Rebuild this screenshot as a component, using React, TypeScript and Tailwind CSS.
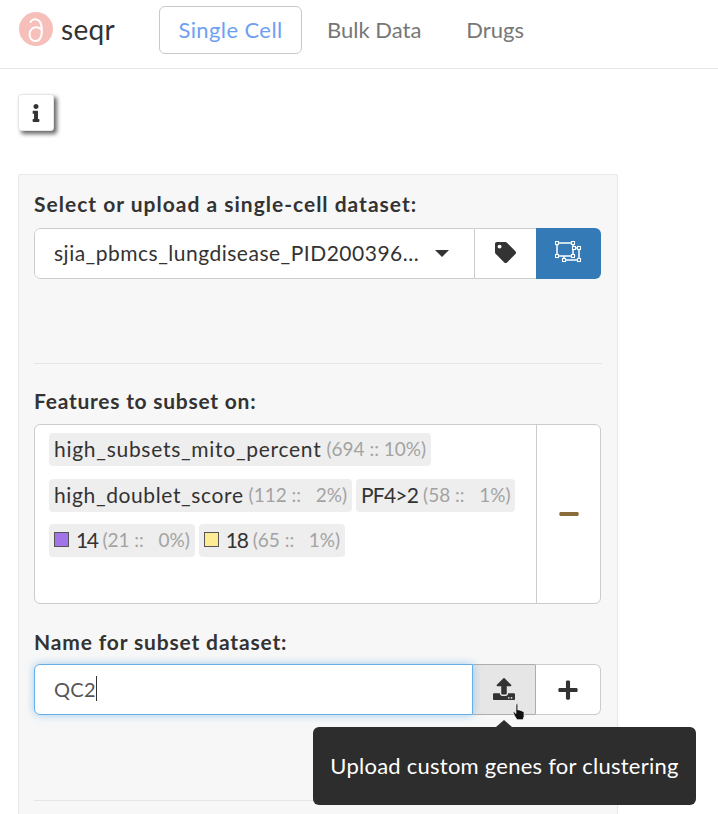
import { FaInfo, FaTag, FaMinus, FaUpload, FaPlus } from "react-icons/fa";

const Chip = ({ name, count, swatch, nameClass = "tracking-[0.72px]" }: { name: string; count: string; swatch?: string; nameClass?: string }) => (
  <span className="inline-flex items-center h-[33px] bg-[#eeeeee] rounded-[4px] px-[5px] whitespace-pre text-[21px] text-[#333333]">
    {swatch && <span className={`w-[15px] h-[15px] border border-[#555] mr-[7px] mt-[-2px] ${swatch}`} />}
    <span className={`mt-[-1px] ${nameClass}`}>{name}</span>
    <span className="text-[#a3a3a3] ml-[5px] text-[19px]">{count}</span>
  </span>
);

const Logo = () => (
  <svg width="34" height="34" viewBox="0 0 34 34" className="shrink-0">
    <circle cx="17" cy="17" r="17" fill="#f6bfb9" />
    <path
      d="M11.5 10C13 6.5 22 4.5 22.8 16.5C23.3 25 20.5 29 16.5 29C12.8 29 10.6 26 10.6 22.3C10.6 17.5 14.5 14.8 18 15.2C20 15.4 21.6 16.5 22.6 18"
      fill="none"
      stroke="#ffffff"
      strokeWidth="2"
      strokeLinecap="round"
    />
  </svg>
);

// handles on the corners of the two rectangles
const corners = [
  [7, 7], [23, 7], [7, 20], [23, 20], [14, 24], [29, 24], [29, 12], [24, 12],
];

const ObjectUngroup = () => (
  <svg width="27" height="22" viewBox="5 5 27 22" className="mb-[3px]" fill="none" stroke="#ffffff" strokeWidth="1.5">
    <rect x="7" y="7" width="16" height="13" />
    <path d="M23 12h6v12H14v-4" />
    {corners.map(([x, y]) => (
      <rect key={`${x}-${y}`} x={x - 1.5} y={y - 1.5} width="3" height="3" fill="#337ab7" strokeWidth="1.1" />
    ))}
  </svg>
);

export default function App() {
  return (
    <div className="relative w-[718px] h-[814px] overflow-hidden bg-white text-[#333333] font-['Lato','Open_Sans',sans-serif]">
      <nav className="h-[69px] border-b border-[#e7e7e7] flex items-start pl-[19px]">
        <div className="w-[140px] pt-[12px] flex items-center">
          <Logo />
          <span className="ml-[8px] text-[28px] leading-[34px] tracking-[0.3px] mt-[-1px] text-[#333333]">seqr</span>
        </div>
        <div className="flex items-center pt-[6px] text-[22px]">
          <a className="h-[48px] w-[143px] pb-[2px] flex items-center justify-center border border-[#c9c9c9] rounded-[6px] text-[#6f9ff0] tracking-[0.4px]">Single Cell</a>
          <a className="ml-[25px] mb-[2px] text-[#777777]">Bulk Data</a>
          <a className="ml-[45px] mb-[2px] text-[#777777]">Drugs</a>
        </div>
      </nav>

      <div className="pl-[18px] pt-[25px]">
        <button className="w-[36px] h-[37px] flex items-center justify-center bg-white border border-[#e5e5e5] rounded-[3px] shadow-[3px_3px_4px_rgba(0,0,0,0.6)]">
          <FaInfo className="text-[#333333]" size={18} />
        </button>
      </div>

      <div className="ml-[18px] mt-[43px] w-[600px] h-[700px] bg-[#f7f7f7] border border-[#e8e8e8] rounded-[2px] px-[15px] pt-[15px]">
        <label className="block font-bold text-[21px] tracking-[1px] leading-[28px] mb-[10px]">Select or upload a single-cell dataset:</label>
        <div className="flex h-[51px] w-[567px] bg-white rounded-[6px] overflow-hidden">
          <div className="w-[441px] flex items-center pl-[19px] pr-[25px] text-[21px] tracking-[0.5px] border border-[#cccccc] rounded-l-[6px]">
            <span className="flex-1 whitespace-nowrap overflow-hidden pb-[2px]">sjia_pbmcs_lungdisease_PID200396...</span>
            <span className="ml-[10px] w-0 h-0 border-x-[7px] border-x-transparent border-t-[7px] border-t-[#333333]" />
          </div>
          <div className="w-[61px] flex items-center justify-center border-y border-[#cccccc]">
            <FaTag size={21} className="text-[#333333] mb-[3px]" />
          </div>
          <div className="w-[65px] flex items-center justify-center bg-[#337ab7]">
            <ObjectUngroup />
          </div>
        </div>

        <div className="border-t border-[#e6e6e6] mt-[84px]" />

        <label className="block font-bold text-[21px] tracking-[0.75px] leading-[28px] mt-[23px] mb-[9px]">Features to subset on:</label>
        <div className="flex h-[180px] w-[567px] bg-white border border-[#cccccc] rounded-[6px]">
          <div className="w-[502px] pl-[14px] pt-[8px] flex flex-col border-r border-[#cccccc]">
            <div className="flex gap-[4px]"><Chip name="high_subsets_mito_percent" count="(694 :: 10%)" /></div>
            <div className="flex gap-[4px] mt-[13px]">
              <Chip name="high_doublet_score" count="(112 ::   2%)" nameClass="tracking-[0.62px]" />
              <Chip name="PF4>2" count="(58 ::   1%)" nameClass="tracking-[-0.8px]" />
            </div>
            <div className="flex gap-[4px] mt-[12px]">
              <Chip name="14" count="(21 ::   0%)" swatch="bg-[#a374e8]" nameClass="tracking-[-1.5px]" />
              <Chip name="18" count="(65 ::   1%)" swatch="bg-[#fdec94]" nameClass="tracking-[-1.2px]" />
            </div>
          </div>
          <div className="w-[63px] flex items-center justify-center">
            <FaMinus size={22} className="text-[#8a6d3b]" />
          </div>
        </div>

        <label className="block font-bold text-[21px] tracking-[0.85px] leading-[28px] mt-[24px] mb-[8px]">Name for subset dataset:</label>
        <div className="flex h-[51px] w-[567px] rounded-[6px] bg-white">
          <div className="w-[439px] flex items-center pl-[19px] pb-[2px] text-[20px] tracking-[0.3px] text-[#555555] border border-[#66afe9] rounded-l-[6px] shadow-[0_0_8px_rgba(102,175,233,0.6)] z-10 bg-white">
            QC2<span className="w-px h-[25px] bg-[#333333]" />
          </div>
          <div className="w-[62px] flex items-center justify-center bg-[#e6e6e6] border-y border-[#adadad]">
            <FaUpload size={22} className="text-[#333333] mb-[2px]" />
          </div>
          <div className="w-[66px] flex items-center justify-center border border-l-[#adadad] border-[#cccccc] rounded-r-[6px]">
            <FaPlus size={22} className="text-[#333333]" />
          </div>
        </div>

        <div className="border-t border-[#e6e6e6] mt-[85px]" />
      </div>

      {/* cursor and tooltip sit over the form */}
      <svg className="absolute left-[512px] top-[703px]" width="16" height="19" viewBox="0 0 16 19">
        <path
          d="M4 1.2c.7-.7 1.8-.3 1.9.7v5l.6-.3V7l1.2.1.8.4 1 .1.9.6.9.3.8 1v4l-1 3.3H5l-2.5-4L1 9.6c0-.9 1-1 1.6-.5l1.2 1.4z"
          fill="#111111"
          stroke="#ffffff"
          strokeWidth="0.8"
        />
      </svg>
      <div className="absolute left-[496px] top-[720px] w-0 h-0 border-x-[8px] border-x-transparent border-b-[7px] border-b-[#2d2d2d]" />
      <div className="absolute left-[313px] top-[727px] w-[383px] h-[78px] pb-[2px] rounded-[6px] bg-[#2d2d2d] text-white text-[22px] tracking-[0.25px] flex items-center justify-center whitespace-nowrap">
        Upload custom genes for clustering
      </div>
    </div>
  );
}
